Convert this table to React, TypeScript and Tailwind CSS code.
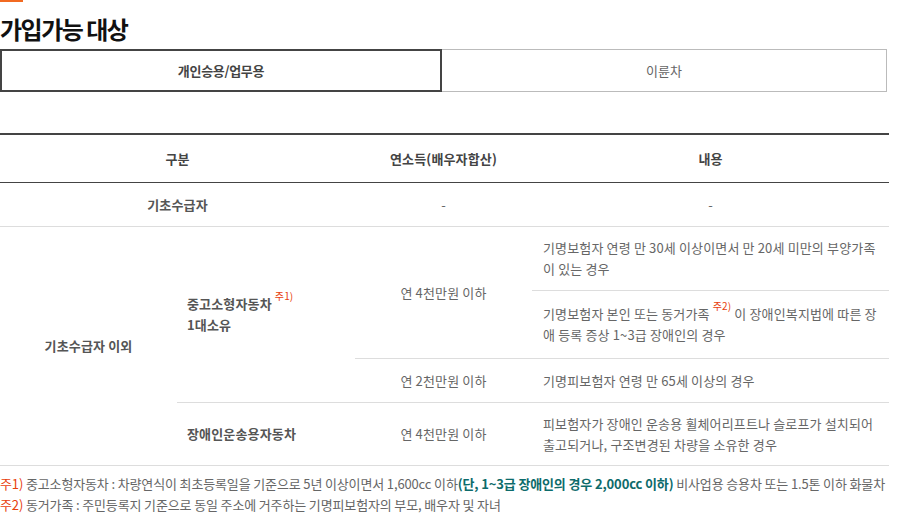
import React from "react";

const font = { fontFamily: '"Noto Sans CJK KR", "Noto Sans", sans-serif' };

function Sup({ children }: { children: React.ReactNode }) {
  return (
    <sup className="relative top-[-2px] ml-[3px] text-[10px] font-normal text-[#e8400c] align-top leading-none">
      {children}
    </sup>
  );
}

export default function App() {
  return (
    <div className="w-[905px] h-[528px] bg-white overflow-hidden text-[#666]" style={font}>
      <div className="w-[23px] h-[2px] bg-[#f26a21]" />
      <h2 className="mt-[11px] text-[24px] leading-[32px] font-bold text-[#111] tracking-[-1.5px]">가입가능 대상</h2>
      <div className="mt-[4px] flex w-[887px] h-[43px]">
        <div className="w-[442px] border-2 border-[#444] flex items-center justify-center text-[13px] font-bold text-[#444] tracking-[-0.3px]">
          개인승용/업무용
        </div>
        <div className="flex-1 border border-l-0 border-[#bbb] flex items-center justify-center text-[13px] text-[#666]">
          이륜차
        </div>
      </div>
      <table className="mt-[41px] w-[889px] border-collapse text-[13px] tracking-[0.15px]">
        <colgroup>
          <col className="w-[177px]" />
          <col className="w-[178px]" />
          <col className="w-[177px]" />
          <col className="w-[357px]" />
        </colgroup>
        <thead>
          <tr className="h-[48px] border-t-2 border-b border-t-[#444] border-b-[#444]">
            <th colSpan={2} className="font-bold text-[#444] text-center">구분</th>
            <th className="font-bold text-[#444] text-center">연소득(배우자합산)</th>
            <th className="font-bold text-[#444] text-center">내용</th>
          </tr>
        </thead>
        <tbody className="leading-[21px]">
          <tr className="h-[44px] border-b border-[#ddd]">
            <td colSpan={2} className="text-center font-bold text-[#555]">기초수급자</td>
            <td className="text-center">-</td>
            <td className="text-center">-</td>
          </tr>
          <tr className="h-[64px]">
            <td rowSpan={4} className="text-center font-bold text-[#555] border-b border-[#ddd]">기초수급자 이외</td>
            <td rowSpan={3} className="pl-[10px] font-bold text-[#555] border-b border-[#ddd]">
              중고소형자동차<Sup>주1)</Sup>
              <br />
              1대소유
            </td>
            <td rowSpan={2} className="text-center border-b border-[#ddd]">연 4천만원 이하</td>
            <td className="pl-[11px] border-b border-[#ddd]">
              기명보험자 연령 만 30세 이상이면서 만 20세 미만의 부양가족
              <br />이 있는 경우
            </td>
          </tr>
          <tr className="h-[68px]">
            <td className="pl-[11px] border-b border-[#ddd]">
              기명보험자 본인 또는 동거가족<Sup>주2)</Sup> 이 장애인복지법에 따른 장
              <br />애 등록 증상 1~3급 장애인의 경우
            </td>
          </tr>
          <tr className="h-[44px]">
            <td className="text-center border-b border-[#ddd]">연 2천만원 이하</td>
            <td className="pl-[11px] border-b border-[#ddd]">기명피보험자 연령 만 65세 이상의 경우</td>
          </tr>
          <tr className="h-[63px]">
            <td className="pl-[10px] font-bold text-[#555] border-b border-[#ddd]">장애인운송용자동차</td>
            <td className="text-center border-b border-[#ddd]">연 4천만원 이하</td>
            <td className="pl-[11px] border-b border-[#ddd]">
              피보험자가 장애인 운송용 휠체어리프트나 슬로프가 설치되어
              <br />출고되거나, 구조변경된 차량을 소유한 경우
            </td>
          </tr>
        </tbody>
      </table>
      <div className="mt-[7px] text-[13px] leading-[21px] tracking-[-0.14px] whitespace-nowrap">
        <p>
          <span className="text-[#e8400c]">주1)</span> 중고소형자동차 : 차량연식이 최초등록일을 기준으로 5년 이상이면서 1,600cc 이하
          <b className="text-[#0d6b6b]">(단, 1~3급 장애인의 경우 2,000cc 이하)</b> 비사업용 승용차 또는 1.5톤 이하 화물차
        </p>
        <p>
          <span className="text-[#e8400c]">주2)</span> 동거가족 : 주민등록지 기준으로 동일 주소에 거주하는 기명피보험자의 부모, 배우자 및 자녀
        </p>
      </div>
    </div>
  );
}
